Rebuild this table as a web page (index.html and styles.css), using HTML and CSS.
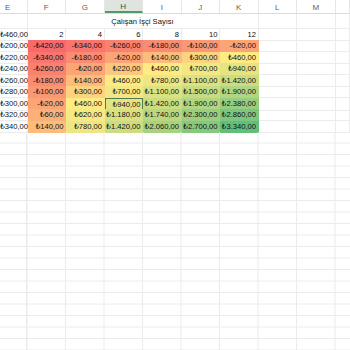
FILE: index.html
```html
<!DOCTYPE html>
<html lang="tr">
<head>
<meta charset="utf-8">
<title>Çalışan İşçi Sayısı</title>
<link rel="stylesheet" href="styles.css">
</head>
<body>
<div class="sheet">
  <div class="colhdr">
    <div class="hc first">E</div><div class="hc">F</div><div class="hc">G</div><div class="hc active">H</div><div class="hc">I</div><div class="hc">J</div><div class="hc">K</div><div class="hc">L</div><div class="hc">M</div><div class="hc"></div>
  </div>
  <div class="row title-row">
    <div class="c"></div><div class="c merged">Çalışan İşçi Sayısı</div><div class="c"></div><div class="c"></div><div class="c"></div>
  </div>
  <div class="row">
    <div class="c n">₺460,00</div><div class="c n">2</div><div class="c n">4</div><div class="c n">6</div><div class="c n">8</div><div class="c n">10</div><div class="c n">12</div><div class="c"></div><div class="c"></div><div class="c"></div>
  </div>
  <div class="row">
    <div class="c n">₺200,00</div>
    <div class="c n f" style="background:rgb(248,105,107)">-₺420,00</div>
    <div class="c n f" style="background:rgb(249,117,109)">-₺340,00</div>
    <div class="c n f" style="background:rgb(249,129,112)">-₺260,00</div>
    <div class="c n f" style="background:rgb(250,140,114)">-₺180,00</div>
    <div class="c n f" style="background:rgb(251,152,116)">-₺100,00</div>
    <div class="c n f" style="background:rgb(251,164,118)">-₺20,00</div>
    <div class="c"></div><div class="c"></div><div class="c"></div>
  </div>
  <div class="row">
    <div class="c n">₺220,00</div>
    <div class="c n f" style="background:rgb(249,117,109)">-₺340,00</div>
    <div class="c n f" style="background:rgb(250,140,114)">-₺180,00</div>
    <div class="c n f" style="background:rgb(251,164,118)">-₺20,00</div>
    <div class="c n f" style="background:rgb(252,188,123)">₺140,00</div>
    <div class="c n f" style="background:rgb(254,211,127)">₺300,00</div>
    <div class="c n f" style="background:rgb(255,235,132)">₺460,00</div>
    <div class="c"></div><div class="c"></div><div class="c"></div>
  </div>
  <div class="row">
    <div class="c n">₺240,00</div>
    <div class="c n f" style="background:rgb(249,129,112)">-₺260,00</div>
    <div class="c n f" style="background:rgb(251,164,118)">-₺20,00</div>
    <div class="c n f" style="background:rgb(253,200,125)">₺220,00</div>
    <div class="c n f" style="background:rgb(255,235,132)">₺460,00</div>
    <div class="c n f" style="background:rgb(242,231,131)">₺700,00</div>
    <div class="c n f" style="background:rgb(229,228,130)">₺940,00</div>
    <div class="c"></div><div class="c"></div><div class="c"></div>
  </div>
  <div class="row">
    <div class="c n">₺260,00</div>
    <div class="c n f" style="background:rgb(250,140,114)">-₺180,00</div>
    <div class="c n f" style="background:rgb(252,188,123)">₺140,00</div>
    <div class="c n f" style="background:rgb(255,235,132)">₺460,00</div>
    <div class="c n f" style="background:rgb(238,230,131)">₺780,00</div>
    <div class="c n f" style="background:rgb(220,225,130)">₺1.100,00</div>
    <div class="c n f" style="background:rgb(203,220,129)">₺1.420,00</div>
    <div class="c"></div><div class="c"></div><div class="c"></div>
  </div>
  <div class="row">
    <div class="c n">₺280,00</div>
    <div class="c n f" style="background:rgb(251,152,116)">-₺100,00</div>
    <div class="c n f" style="background:rgb(254,211,127)">₺300,00</div>
    <div class="c n f" style="background:rgb(242,231,131)">₺700,00</div>
    <div class="c n f" style="background:rgb(220,225,130)">₺1.100,00</div>
    <div class="c n f" style="background:rgb(199,219,129)">₺1.500,00</div>
    <div class="c n f" style="background:rgb(177,213,128)">₺1.900,00</div>
    <div class="c"></div><div class="c"></div><div class="c"></div>
  </div>
  <div class="row">
    <div class="c n">₺300,00</div>
    <div class="c n f" style="background:rgb(251,164,118)">-₺20,00</div>
    <div class="c n f" style="background:rgb(255,235,132)">₺460,00</div>
    <div class="c n f sel" style="background:rgb(229,228,130)">₺940,00</div>
    <div class="c n f" style="background:rgb(203,220,129)">₺1.420,00</div>
    <div class="c n f" style="background:rgb(177,213,128)">₺1.900,00</div>
    <div class="c n f" style="background:rgb(151,205,126)">₺2.380,00</div>
    <div class="c"></div><div class="c"></div><div class="c"></div>
  </div>
  <div class="row">
    <div class="c n">₺320,00</div>
    <div class="c n f" style="background:rgb(252,176,121)">₺60,00</div>
    <div class="c n f" style="background:rgb(246,233,132)">₺620,00</div>
    <div class="c n f" style="background:rgb(216,224,130)">₺1.180,00</div>
    <div class="c n f" style="background:rgb(186,215,128)">₺1.740,00</div>
    <div class="c n f" style="background:rgb(155,206,126)">₺2.300,00</div>
    <div class="c n f" style="background:rgb(125,198,125)">₺2.860,00</div>
    <div class="c"></div><div class="c"></div><div class="c"></div>
  </div>
  <div class="row">
    <div class="c n">₺340,00</div>
    <div class="c n f" style="background:rgb(252,188,123)">₺140,00</div>
    <div class="c n f" style="background:rgb(238,230,131)">₺780,00</div>
    <div class="c n f" style="background:rgb(203,220,129)">₺1.420,00</div>
    <div class="c n f" style="background:rgb(168,210,127)">₺2.060,00</div>
    <div class="c n f" style="background:rgb(134,200,125)">₺2.700,00</div>
    <div class="c n f" style="background:rgb(99,190,123)">₺3.340,00</div>
    <div class="c"></div><div class="c"></div><div class="c"></div>
  </div>
  <div class="empty"></div>
</div>
</body>
</html>
```
FILE: styles.css
```css
html, body {
  margin: 0;
  padding: 0;
  background: #ffffff;
  overflow: hidden;
  height: 350px;
}

.sheet {
  display: flex;
  flex-direction: column;
  width: 350px;
  height: 350px;
  overflow: hidden;
  font-family: "Liberation Sans", Arial, "DejaVu Sans", sans-serif;
  font-size: 7.6px;
  color: #111111;
}

.colhdr {
  display: grid;
  grid-template-columns: 27.5px repeat(8, 38.5px) 14.5px;
  height: 14px;
  border-bottom: 1px solid #dcdcdc;
  box-sizing: border-box;
  background: #ffffff;
}

.hc {
  display: flex;
  align-items: center;
  justify-content: center;
  border-right: 1px solid #e6e6e6;
  color: #5f5f5f;
  font-size: 8px;
  padding-top: 1px;
  box-sizing: border-box;
}

.hc.first {
  padding-right: 11px;
}

.hc.active {
  background: #e0e4e0;
  color: #1e5e36;
  border-bottom: 2px solid #4f9a68;
  padding-top: 2px;
}

.row {
  display: grid;
  grid-template-columns: 27.5px repeat(8, 38.5px) 14.5px;
  height: 11.5px;
}

.title-row {
  height: 14.5px;
  grid-template-columns: 27.5px 231px repeat(2, 38.5px) 14.5px;
}

.c {
  box-sizing: border-box;
  border-right: 1px solid #ebebeb;
  border-bottom: 1px solid #ebebeb;
  line-height: 11px;
  white-space: nowrap;
}

.title-row .c {
  line-height: 13px;
  padding-top: 1px;
}

.merged {
  text-align: center;
}

.n {
  text-align: right;
  padding-right: 1.5px;
}

.f {
  border-color: transparent;
  color: #111111;
}

.sel {
  border: 1px solid #55774a;
}

.empty {
  flex: 1;
  background-image:
    linear-gradient(to right, transparent 26.5px, #ebebeb 26.5px, #ebebeb 27.5px, transparent 27.5px),
    linear-gradient(to right, transparent 37.5px, #ebebeb 37.5px),
    linear-gradient(to bottom, transparent 10.5px, #ebebeb 10.5px);
  background-size: 100% 100%, 38.5px 100%, 100% 11.5px;
  background-position: 0 0, 27.5px 0, 0 0;
  background-repeat: no-repeat, repeat, repeat;
}
```
